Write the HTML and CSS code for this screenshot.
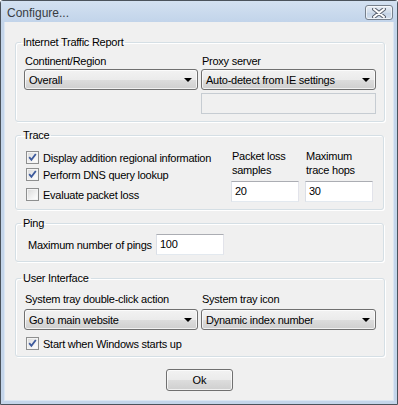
FILE: index.html
```html
<!DOCTYPE html>
<html lang="en">
<head>
    <meta charset="UTF-8">
    <meta name="viewport" content="width=device-width, initial-scale=1.0">
    <title>Configure...</title>
    <link rel="stylesheet" href="styles.css">
</head>
<body>
    <div class="window">
        <div class="titlebar">
            <span class="title">Configure...</span>
            <button class="close-btn" title="Close">
                <svg width="14" height="10" viewBox="0 0 14 10">
                    <path d="M2 1 L12 9 M12 1 L2 9" stroke="#5a6270" stroke-width="4" stroke-linecap="round"/>
                    <path d="M2 1 L12 9 M12 1 L2 9" stroke="#ffffff" stroke-width="2" stroke-linecap="round"/>
                </svg>
            </button>
        </div>
        <div class="client">
            <fieldset class="group group-itr">
                <legend>Internet Traffic Report</legend>
                <div class="two-col">
                    <div class="field">
                        <label>Continent/Region</label>
                        <div class="combo"><span>Overall</span><i class="arrow"></i></div>
                    </div>
                    <div class="field">
                        <label>Proxy server</label>
                        <div class="combo"><span>Auto-detect from IE settings</span><i class="arrow"></i></div>
                        <div class="textbox disabled"></div>
                    </div>
                </div>
            </fieldset>

            <fieldset class="group group-trace">
                <legend>Trace</legend>
                <div class="trace-grid">
                    <div class="checks">
                        <div class="check-row"><span class="checkbox checked"></span>Display addition regional information</div>
                        <div class="check-row"><span class="checkbox checked"></span>Perform DNS query lookup</div>
                        <div class="check-row spaced"><span class="checkbox"></span>Evaluate packet loss</div>
                    </div>
                    <div class="num-field">
                        <label>Packet loss<br>samples</label>
                        <div class="textbox">20</div>
                    </div>
                    <div class="num-field">
                        <label>Maximum<br>trace hops</label>
                        <div class="textbox">30</div>
                    </div>
                </div>
            </fieldset>

            <fieldset class="group group-ping">
                <legend>Ping</legend>
                <div class="ping-row">
                    <label>Maximum number of pings</label>
                    <div class="textbox">100</div>
                </div>
            </fieldset>

            <fieldset class="group group-ui">
                <legend>User Interface</legend>
                <div class="two-col">
                    <div class="field">
                        <label>System tray double-click action</label>
                        <div class="combo"><span>Go to main website</span><i class="arrow"></i></div>
                    </div>
                    <div class="field">
                        <label>System tray icon</label>
                        <div class="combo"><span>Dynamic index number</span><i class="arrow"></i></div>
                    </div>
                </div>
                <div class="check-row startup"><span class="checkbox checked"></span>Start when Windows starts up</div>
            </fieldset>

            <div class="buttons">
                <button class="ok-btn">Ok</button>
            </div>
        </div>
    </div>
</body>
</html>
```

FILE: styles.css
```css
body {
    margin: 0;
    font-family: "Liberation Sans", Arial, sans-serif;
    font-size: 11px;
    letter-spacing: -0.25px;
    color: #000;
    background: #ffffff;
}
.window {
    width: 398px;
    height: 405px;
    box-sizing: border-box;
    border: 1px solid #4b535c;
    border-radius: 3px 3px 0 0;
    background: #c4d5ea;
    padding: 0 3px 3px 3px;
    display: flex;
    flex-direction: column;
}
.titlebar {
    height: 21px;
    display: flex;
    align-items: center;
    justify-content: space-between;
    background: linear-gradient(#d3e1f1, #c2d4ea);
    margin: 0 -3px;
    padding: 0 4px 0 6px;
}
.title {
    font-size: 12px;
    letter-spacing: 0;
    color: #383c42;
    margin-top: 2px;
}
.close-btn {
    width: 28px;
    height: 15px;
    margin-top: 2px;
    padding: 0;
    border: 1px solid #76808c;
    border-radius: 3px;
    background: linear-gradient(#e8eef6, #d0dcea 50%, #c3d2e5 51%, #d4e0ee);
    display: flex;
    align-items: center;
    justify-content: center;
    box-shadow: inset 0 0 0 1px rgba(255, 255, 255, 0.6);
}
.client {
    flex: 1;
    background: #f0f0f0;
    border: 1px solid #dbe6f3;
    border-top: none;
    padding: 0 9px 0 10px;
}
.group {
    margin: 0;
    border: 1px solid #d5dfe5;
    border-radius: 3px;
    padding: 6px 8px 7px 8px;
    box-shadow: inset 1px 1px 0 #fff, 1px 1px 0 #fff;
}
.group legend {
    padding: 0 2px;
    margin-left: -3px;
    line-height: 13px;
}
.group-itr {
    margin-top: 14px;
}
.group-trace {
    margin-top: 7px;
    padding-top: 7px;
    padding-bottom: 6px;
}
.group-ping {
    margin-top: 7px;
    padding-top: 4px;
    padding-bottom: 6px;
}
.group-ui {
    margin-top: 10px;
    padding-top: 7px;
    padding-bottom: 4px;
}
.two-col {
    display: grid;
    grid-template-columns: 174px 175px;
    column-gap: 3px;
}
.field label {
    display: block;
    line-height: 13px;
    margin-bottom: 1px;
    padding-left: 1px;
}
.group-ui .field label {
    line-height: 14px;
    margin-bottom: 3px;
}
.combo {
    height: 21px;
    box-sizing: border-box;
    border: 1px solid #707070;
    border-radius: 3px;
    background: linear-gradient(#f2f2f2, #ebebeb 50%, #dddddd 51%, #cfcfcf);
    display: flex;
    align-items: center;
    justify-content: space-between;
    padding: 0 5px 0 4px;
    box-shadow: inset 0 0 0 1px rgba(255, 255, 255, 0.7);
}
.arrow {
    width: 0;
    height: 0;
    border-left: 4px solid transparent;
    border-right: 4px solid transparent;
    border-top: 4px solid #000;
    margin-top: 1px;
}
.textbox {
    height: 21px;
    box-sizing: border-box;
    background: #fff;
    border: 1px solid;
    border-color: #abadb3 #e2e3ea #e3e9ef #dbdfe6;
    padding: 0 3px;
    line-height: 19px;
}
.textbox.disabled {
    margin-top: 3px;
    background: #f0f0f0;
    border-color: #c6ccd2;
}
.trace-grid {
    display: grid;
    grid-template-columns: 201px 68px 68px;
    column-gap: 6px;
}
.checks {
    padding-left: 2px;
}
.check-row {
    display: flex;
    align-items: center;
    height: 17px;
    white-space: nowrap;
}
.check-row.spaced {
    margin-top: 3px;
}
.checkbox {
    width: 13px;
    height: 13px;
    box-sizing: border-box;
    border: 1px solid #8e8f8f;
    background: linear-gradient(135deg, #d9d9d9, #f6f6f6 70%, #ffffff);
    box-shadow: inset 0 0 0 1px #f4f4f4;
    margin-right: 4px;
    flex: none;
}
.checkbox.checked {
    background-image: url("data:image/svg+xml,%3Csvg xmlns='http://www.w3.org/2000/svg' width='11' height='11' viewBox='0 0 11 11'%3E%3Cpath d='M2.2 5.2 L4.4 7.8 L8.8 2' fill='none' stroke='%233d5a9c' stroke-width='1.8'/%3E%3C/svg%3E"), linear-gradient(135deg, #d9d9d9, #f6f6f6 70%, #ffffff);
    background-repeat: no-repeat;
    background-position: center;
}
.num-field label {
    display: block;
    line-height: 14px;
    height: 28px;
    margin-bottom: 4px;
    padding-left: 1px;
}
.ping-row {
    display: flex;
    align-items: center;
}
.ping-row label {
    width: 128px;
    padding-left: 4px;
    white-space: nowrap;
}
.ping-row .textbox {
    width: 68px;
}
.check-row.startup {
    margin-top: 5px;
    padding-left: 2px;
}
.buttons {
    display: flex;
    justify-content: center;
    margin-top: 12px;
}
.ok-btn {
    width: 67px;
    height: 22px;
    border: 1px solid #707070;
    border-radius: 3px;
    background: linear-gradient(#f2f2f2, #ebebeb 50%, #dddddd 51%, #cfcfcf);
    box-shadow: inset 0 0 0 1px rgba(255, 255, 255, 0.7);
    font-family: "Liberation Sans", Arial, sans-serif;
    font-size: 11px;
    color: #000;
    padding: 0;
}
```
